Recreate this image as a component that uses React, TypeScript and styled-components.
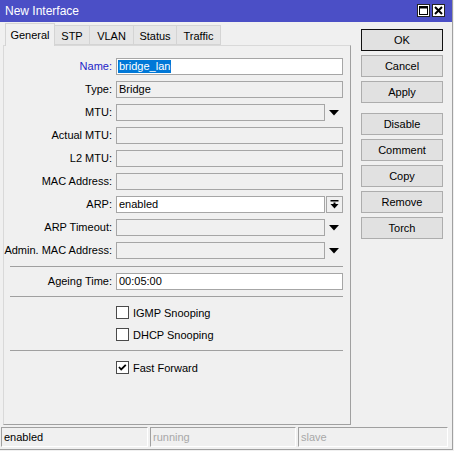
import React from "react";
import styled, { createGlobalStyle } from "styled-components";

const Global = createGlobalStyle`
  html, body { margin: 0; padding: 0; background: #f0f0f0; }
  body { font-family: "Liberation Sans", Arial, sans-serif; font-size: 11px; color: #000; }
  * { box-sizing: border-box; }
`;

const Window = styled.div`
  width: 453px;
  height: 450px;
  display: flex;
  flex-direction: column;
  background: #f0f0f0;
  border-right: 1px solid #a0a0a0;
  border-bottom: 1px solid #a0a0a0;
`;

const TitleBar = styled.div`
  height: 22px;
  flex: none;
  background: #4b4fc6;
  display: flex;
  align-items: center;
  padding: 0 7px 0 5px;
  color: #fff;
  font-size: 12px;
`;

const Title = styled.span`
  flex: 1;
`;

const TitleButtons = styled.div`
  display: flex;
  gap: 2px;
  margin-top: -1px;
`;

const TitleBtn = styled.div`
  width: 13px;
  height: 13px;
  background: #fff;
  border: 1px solid #222;
  display: flex;
  align-items: center;
  justify-content: center;
`;

const Body = styled.div`
  flex: 1;
  display: flex;
`;

const LeftCol = styled.div`
  width: 351px;
  padding-left: 3px;
  display: flex;
  flex-direction: column;
`;

const TabRow = styled.div`
  height: 24px;
  display: flex;
  align-items: flex-end;
  padding-left: 2px;
  margin-bottom: -1px;
  position: relative;
  z-index: 1;
`;

const Tab = styled.div<{ $active?: boolean; $w: number }>`
  width: ${(p) => p.$w}px;
  height: ${(p) => (p.$active ? 23 : 20)}px;
  margin-bottom: ${(p) => (p.$active ? 0 : 1)}px;
  background: ${(p) => (p.$active ? "#f0f0f0" : "#e6e6e6")};
  border: 1px solid #d4d4d4;
  border-bottom: ${(p) => (p.$active ? "none" : "1px solid #d4d4d4")};
  margin-left: -1px;
  display: flex;
  align-items: center;
  justify-content: center;
  padding-top: ${(p) => (p.$active ? 0 : 1)}px;
  &:first-child { margin-left: 0; }
`;

const Panel = styled.div`
  height: 380px;
  border-top: 1px solid #d9d9d9;
  border-left: 1px solid #d9d9d9;
  border-right: 1px solid #a0a0a0;
  border-bottom: 1px solid #a0a0a0;
  padding-top: 12px;
  display: flex;
  flex-direction: column;
`;

const Row = styled.div<{ $mt?: number }>`
  display: flex;
  align-items: center;
  height: 17px;
  margin-top: ${(p) => p.$mt ?? 6}px;
  &:first-child { margin-top: 0; }
`;

const Label = styled.div<{ $blue?: boolean }>`
  width: 108px;
  margin-right: 4px;
  text-align: right;
  white-space: nowrap;
  color: ${(p) => (p.$blue ? "#1e1ec8" : "#000")};
  line-height: 17px;
`;

const Field = styled.div<{ $w: number; $white?: boolean }>`
  width: ${(p) => p.$w}px;
  height: 17px;
  border: 1px solid #a6a6a6;
  background: ${(p) => (p.$white ? "#fff" : "#f0f0f0")};
  padding-left: 2px;
  line-height: 15px;
  white-space: nowrap;
  overflow: hidden;
`;

const Selected = styled.span`
  background: #0078d7;
  color: #fff;
  margin-left: -1px;
  padding: 0 1px;
  display: inline-block;
  line-height: 13px;
`;

const ArrowZone = styled.div`
  width: 18px;
  height: 17px;
  display: flex;
  align-items: center;
  justify-content: center;
`;

const ArrowButton = styled.div`
  width: 17px;
  height: 17px;
  margin-left: 1px;
  border: 1px solid #a6a6a6;
  background: #f0f0f0;
  display: flex;
  align-items: center;
  justify-content: center;
`;

const Separator = styled.div<{ $mt: number }>`
  height: 1px;
  width: 333px;
  margin: ${(p) => p.$mt}px 0 0 6px;
  background: #a0a0a0;
`;

const CheckRow = styled.div<{ $mt: number }>`
  display: flex;
  align-items: center;
  height: 17px;
  padding-left: 112px;
  margin-top: ${(p) => p.$mt}px;
  gap: 4px;
`;

const Box = styled.div`
  width: 13px;
  height: 13px;
  border: 1px solid #4a4a4a;
  background: #fff;
  display: flex;
  align-items: center;
  justify-content: center;
`;

const ButtonCol = styled.div`
  margin-left: 10px;
  padding-top: 7px;
  width: 82px;
  display: flex;
  flex-direction: column;
`;

const Button = styled.div<{ $default?: boolean; $mt?: number }>`
  height: 22px;
  margin-top: ${(p) => p.$mt ?? 4}px;
  border: 1px solid ${(p) => (p.$default ? "#111" : "#adadad")};
  background: #e1e1e1;
  display: flex;
  align-items: center;
  justify-content: center;
  &:first-child { margin-top: 0; }
`;

const StatusBar = styled.div`
  height: 20px;
  flex: none;
  display: flex;
  gap: 2px;
  padding-left: 1px;
  margin-bottom: 2px;
`;

const StatusCell = styled.div<{ $w: number; $dim?: boolean }>`
  width: ${(p) => p.$w}px;
  height: 20px;
  border-top: 1px solid #a0a0a0;
  border-left: 1px solid #a0a0a0;
  border-right: 1px solid #fff;
  border-bottom: 1px solid #fff;
  padding-left: 2px;
  display: flex;
  align-items: center;
  color: ${(p) => (p.$dim ? "#a8a8a8" : "#000")};
`;

const Triangle = () => (
  <svg width="10" height="6" viewBox="0 0 10 6">
    <polygon points="0,0 10,0 5,5.5" fill="#000" />
  </svg>
);

const CollapseIcon = () => (
  <svg width="9" height="9" viewBox="0 0 9 9">
    <rect x="0.5" y="0" width="8" height="1.5" fill="#000" />
    <rect x="3.5" y="2.5" width="2" height="2" fill="#000" />
    <polygon points="0.5,4 8.5,4 4.5,8.5" fill="#000" />
  </svg>
);

const Check = () => (
  <svg width="11" height="11" viewBox="0 0 11 11">
    <polyline points="2,5 4.2,7.5 8.8,2.8" fill="none" stroke="#000" strokeWidth="1.8" />
  </svg>
);

type FieldKind = "plain" | "white" | "drop" | "dropBtn";

const rows: { label: string; kind: FieldKind; value?: React.ReactNode; blue?: boolean }[] = [
  { label: "Name:", kind: "white", value: <Selected>bridge_lan</Selected>, blue: true },
  { label: "Type:", kind: "plain", value: "Bridge" },
  { label: "MTU:", kind: "drop" },
  { label: "Actual MTU:", kind: "plain" },
  { label: "L2 MTU:", kind: "plain" },
  { label: "MAC Address:", kind: "plain" },
  { label: "ARP:", kind: "dropBtn", value: "enabled" },
  { label: "ARP Timeout:", kind: "drop" },
  { label: "Admin. MAC Address:", kind: "drop" },
];

const FormRow = ({ label, kind, value, blue }: (typeof rows)[number]) => (
  <Row>
    <Label $blue={blue}>{label}</Label>
    {kind === "plain" && <Field $w={227}>{value}</Field>}
    {kind === "white" && (
      <Field $w={227} $white>
        {value}
      </Field>
    )}
    {kind === "drop" && (
      <>
        <Field $w={209}>{value}</Field>
        <ArrowZone>
          <Triangle />
        </ArrowZone>
      </>
    )}
    {kind === "dropBtn" && (
      <>
        <Field $w={209} $white>
          {value}
        </Field>
        <ArrowButton>
          <CollapseIcon />
        </ArrowButton>
      </>
    )}
  </Row>
);

const tabs = [
  { name: "General", w: 50, active: true },
  { name: "STP", w: 36 },
  { name: "VLAN", w: 45 },
  { name: "Status", w: 44 },
  { name: "Traffic", w: 45 },
];

export default function App() {
  return (
    <>
      <Global />
      <Window>
        <TitleBar>
          <Title>New Interface</Title>
          <TitleButtons>
            <TitleBtn>
              <svg width="9" height="9" viewBox="0 0 9 9">
                <rect x="0.5" y="0.5" width="8" height="8" fill="none" stroke="#000" strokeWidth="1" />
                <rect x="0.5" y="0.5" width="8" height="2" fill="#000" />
              </svg>
            </TitleBtn>
            <TitleBtn>
              <svg width="9" height="9" viewBox="0 0 9 9">
                <path d="M1 1 L8 8 M8 1 L1 8" stroke="#000" strokeWidth="2" />
              </svg>
            </TitleBtn>
          </TitleButtons>
        </TitleBar>
        <Body>
          <LeftCol>
            <TabRow>
              {tabs.map((t) => (
                <Tab key={t.name} $w={t.w} $active={t.active}>
                  {t.name}
                </Tab>
              ))}
            </TabRow>
            <Panel>
              {rows.map((r) => (
                <FormRow key={r.label} {...r} />
              ))}
              <Separator $mt={7} />
              <Row $mt={6}>
                <Label>Ageing Time:</Label>
                <Field $w={227} $white>
                  00:05:00
                </Field>
              </Row>
              <Separator $mt={6} />
              <CheckRow $mt={7}>
                <Box />
                <span>IGMP Snooping</span>
              </CheckRow>
              <CheckRow $mt={5}>
                <Box />
                <span>DHCP Snooping</span>
              </CheckRow>
              <Separator $mt={7} />
              <CheckRow $mt={8}>
                <Box>
                  <Check />
                </Box>
                <span>Fast Forward</span>
              </CheckRow>
            </Panel>
          </LeftCol>
          <ButtonCol>
            <Button $default>OK</Button>
            <Button>Cancel</Button>
            <Button>Apply</Button>
            <Button $mt={10}>Disable</Button>
            <Button>Comment</Button>
            <Button>Copy</Button>
            <Button>Remove</Button>
            <Button>Torch</Button>
          </ButtonCol>
        </Body>
        <StatusBar>
          <StatusCell $w={147}>enabled</StatusCell>
          <StatusCell $w={146} $dim>
            running
          </StatusCell>
          <StatusCell $w={150} $dim>
            slave
          </StatusCell>
        </StatusBar>
      </Window>
    </>
  );
}
